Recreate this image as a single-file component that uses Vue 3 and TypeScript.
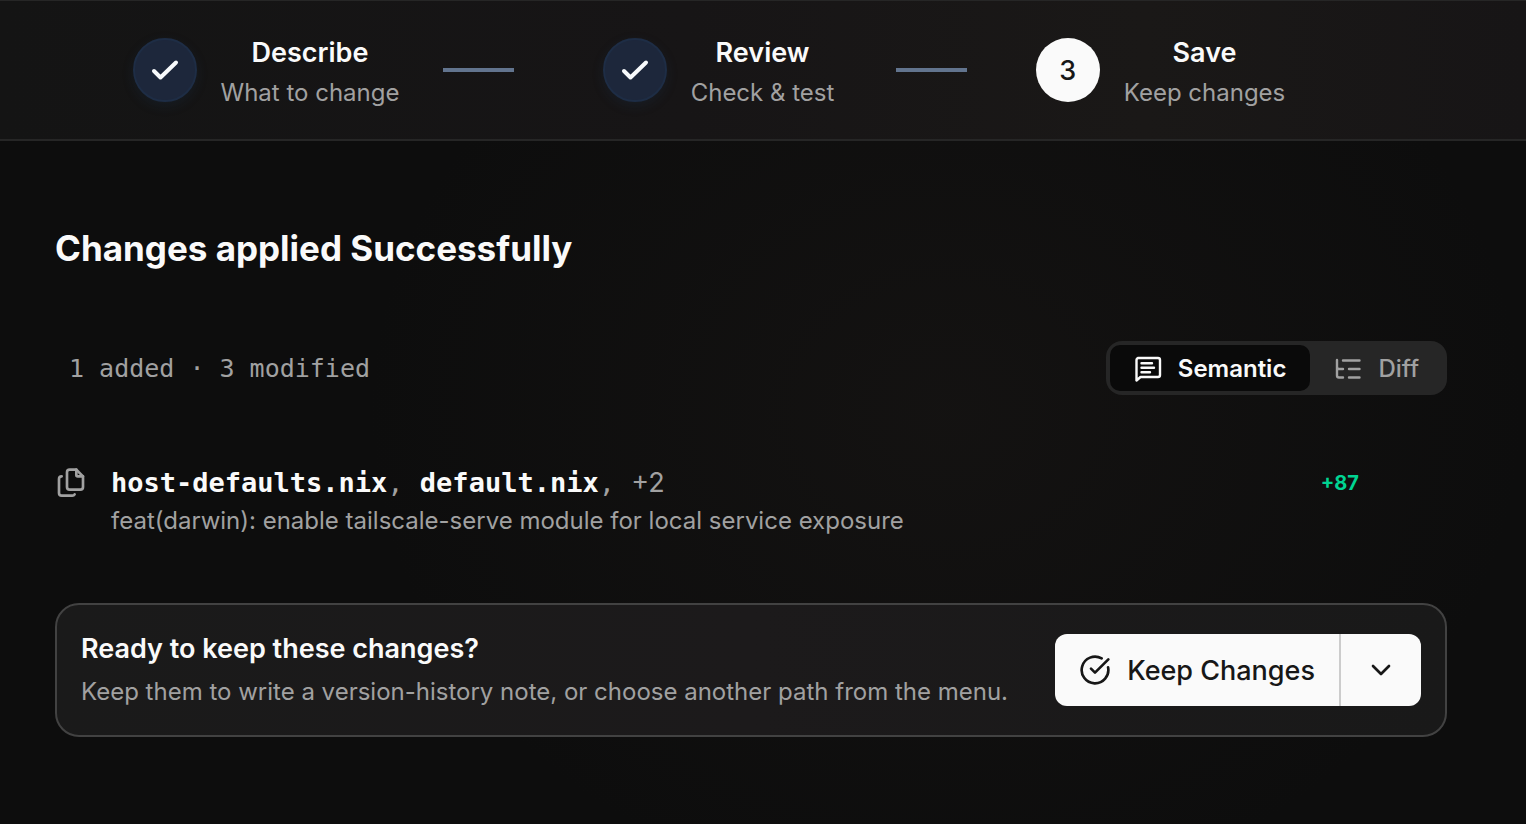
<script setup lang="ts">
import { ref } from 'vue'

interface Step {
  title: string
  hint: string
  done: boolean
}

const steps: Step[] = [
  { title: 'Describe', hint: 'What to change', done: true },
  { title: 'Review', hint: 'Check & test', done: true },
  { title: 'Save', hint: 'Keep changes', done: false },
]

const files = ['host-defaults.nix', 'default.nix']
const view = ref<'semantic' | 'diff'>('semantic')
</script>

<template>
  <div class="app">
    <header class="stepper">
      <ol class="steps">
        <template v-for="(step, i) in steps" :key="step.title">
          <li class="step" :aria-current="step.done ? undefined : 'step'">
            <span class="badge" :class="{ done: step.done }">
              <svg v-if="step.done" class="tick" viewBox="0 0 32 32" aria-hidden="true">
                <path d="M5 17l6.500 6.500L27 8.500" />
              </svg>
              <template v-else>{{ i + 1 }}</template>
            </span>
            <span class="step-text">
              <span class="step-title">{{ step.title }}</span>
              <span class="step-hint">{{ step.hint }}</span>
            </span>
          </li>
          <li v-if="i < steps.length - 1" class="connector" aria-hidden="true"></li>
        </template>
      </ol>
    </header>

    <main class="content">
      <h1>Changes applied Successfully</h1>

      <div class="toolbar">
        <p class="stats">1 added · 3 modified</p>
        <div class="toggle" role="group" aria-label="View">
          <button type="button" :class="{ active: view === 'semantic' }" :aria-pressed="view === 'semantic'" @click="view = 'semantic'">
            <svg class="icon" viewBox="0 0 28 28" aria-hidden="true">
              <path d="M4 4h20a2 2 0 0 1 2 2v15a2 2 0 0 1-2 2H6.500L2.500 26.500V6a2 2 0 0 1 2-2z" />
              <path d="M7.500 9.300h10.500M7.500 13.700h12.500M7.500 18.200h8.500" />
            </svg>
            Semantic
          </button>
          <button type="button" :class="{ active: view === 'diff' }" :aria-pressed="view === 'diff'" @click="view = 'diff'">
            <svg class="icon" viewBox="0 0 28 28" aria-hidden="true">
              <path d="M9 6.500h16.500M15 15h10.500M15 23.500h10.500M3 6v15.500a2 2 0 0 0 2 2h4M3 13a2 2 0 0 0 2 2h4" />
            </svg>
            Diff
          </button>
        </div>
      </div>

      <article class="change">
        <svg class="copy" viewBox="0 0 24 24" aria-hidden="true">
          <path d="M16 2h-5a2 2 0 0 0-2 2v11a2 2 0 0 0 2 2h8a2 2 0 0 0 2-2V7z" />
          <path d="M16 2v4a1 1 0 0 0 1 1h4" />
          <path d="M5 7a2 2 0 0 0-2 2v10.500a2 2 0 0 0 2 2h8a2 2 0 0 0 1.730-1" />
        </svg>
        <div class="change-body">
          <p class="files"><template v-for="f in files" :key="f"><strong>{{ f }}</strong>, </template><span class="more">+2</span></p>
          <p class="message">feat(darwin): enable tailscale-serve module for local service exposure</p>
        </div>
        <span class="count">+87</span>
      </article>

      <section class="panel">
        <div class="panel-text">
          <h2>Ready to keep these changes?</h2>
          <p>Keep them to write a version-history note, or choose another path from the menu.</p>
        </div>
        <div class="split">
          <button type="button" class="keep">
            <svg class="keep-icon" viewBox="0 0 24 24" aria-hidden="true">
              <path d="M21.801 10A10 10 0 1 1 17 3.335" />
              <path d="m9 11 3 3L22 4" />
            </svg>
            Keep Changes
          </button>
          <button type="button" class="menu" aria-label="More options">
            <svg class="chevron" viewBox="0 0 24 24" aria-hidden="true"><path d="m6 9 6 6 6-6" /></svg>
          </button>
        </div>
      </section>
    </main>
  </div>
</template>

<style>
html,
body {
  background: #0d0d0d;
}
</style>

<style scoped>
.app {
  min-height: 100vh;
  box-sizing: border-box;
  font-family: Inter, 'Liberation Sans', sans-serif;
  color: #fafafa;
  background:
    radial-gradient(ellipse 38% 60% at 62% 50%, rgba(50, 42, 38, 0.18), transparent),
    #0d0d0d;
}
svg {
  fill: none;
  stroke: currentColor;
  stroke-width: 2;
  stroke-linecap: round;
  stroke-linejoin: round;
  flex: none;
}
p,
h1,
h2 {
  margin: 0;
}
button {
  font: inherit;
  color: inherit;
  border: 0;
  cursor: pointer;
  display: flex;
  align-items: center;
}
.stepper {
  border-top: 1px solid #262626;
  border-bottom: 2px solid #262626;
  background: linear-gradient(90deg, #141414, #171516 45%, #1a1817 75%, #171516);
  padding: 26px 199px 26px 89px;
}
.steps {
  list-style: none;
  margin: 0;
  padding: 0;
  display: grid;
  grid-template-columns: 354fr 98px 355fr 98px 333fr;
  align-items: center;
}
.step {
  display: flex;
  justify-content: center;
  align-items: center;
  gap: 24px;
}
.badge {
  width: 64px;
  height: 64px;
  box-sizing: border-box;
  border-radius: 50%;
  display: grid;
  place-items: center;
  background: #fafafa;
  color: #171717;
  font-size: 27px;
  font-weight: 500;
}
.badge.done {
  background: #1d273b;
  border: 2px solid #1e2d45;
  color: #f8fafc;
  box-shadow: 0 4px 12px rgba(30, 58, 95, 0.2);
}
.tick {
  width: 32px;
  height: 32px;
  stroke-width: 4;
}
.step-text {
  display: flex;
  flex-direction: column;
  align-items: center;
  padding-top: 6px;
  white-space: nowrap;
}
.step-title {
  font-size: 27px;
  line-height: 40px;
  font-weight: 600;
}
.step-hint {
  font-size: 24px;
  line-height: 40px;
  color: #a1a1a1;
}
.connector {
  width: 71px;
  height: 4px;
  background: #62748e;
}
.content {
  padding: 78px 79px 56px 55px;
}
h1 {
  font-size: 35px;
  line-height: 58px;
  font-weight: 700;
}
.toolbar {
  display: flex;
  justify-content: space-between;
  align-items: center;
  margin-top: 64px;
}
.stats {
  padding-left: 14px;
  font-family: 'DejaVu Sans Mono', 'Liberation Mono', monospace;
  font-size: 25px;
  color: #a1a1a1;
}
.toggle {
  display: flex;
  padding: 4px;
  border-radius: 16px;
  background: #262626;
}
.toggle button {
  height: 46px;
  padding: 0 24px;
  gap: 16px;
  border-radius: 10px;
  background: transparent;
  color: #a1a1a1;
  font-size: 24px;
  font-weight: 500;
}
.toggle button.active {
  background: #0a0a0a;
  color: #fafafa;
  font-weight: 600;
}
.icon {
  width: 28px;
  height: 28px;
  stroke-width: 2.4;
}
.change {
  display: flex;
  align-items: flex-start;
  padding-right: 88px;
  margin-top: 68px;
}
.copy {
  width: 32px;
  height: 32px;
  margin-top: 4px;
  color: #a1a1a1;
}
.change-body {
  flex: 1;
  padding-left: 24px;
}
.files {
  font-family: 'DejaVu Sans Mono', 'Liberation Mono', monospace;
  font-size: 27px;
  line-height: 40px;
  color: #a1a1a1;
}
.files strong {
  color: #fafafa;
}
.more {
  font-family: Inter, 'Liberation Sans', sans-serif;
  font-size: 27px;
}
.message {
  font-size: 24px;
  line-height: 36px;
  color: #a1a1a1;
}
.count {
  font-size: 20px;
  line-height: 40px;
  font-weight: 700;
  color: #00d492;
}
.panel {
  display: flex;
  align-items: center;
  justify-content: space-between;
  gap: 24px;
  margin-top: 64px;
  padding: 22px 24px;
  border: 2px solid #424242;
  border-radius: 24px;
  background: linear-gradient(90deg, #1a1a1a, #1c1a1b 50%, #191919);
}
h2 {
  font-size: 27px;
  line-height: 44px;
  font-weight: 600;
}
.panel-text p {
  font-size: 24px;
  line-height: 42px;
  color: #a1a1a1;
  white-space: nowrap;
}
.split {
  display: flex;
  height: 72px;
  border-radius: 12px;
  overflow: hidden;
  color: #171717;
}
.keep,
.menu {
  background: #fafafa;
}
.keep {
  padding: 0 24px;
  gap: 16px;
  font-size: 27px;
  font-weight: 500;
  white-space: nowrap;
}
.keep-icon {
  width: 32px;
  height: 32px;
}
.menu {
  width: 82px;
  justify-content: center;
  border-left: 2px solid #cccccc;
}
.chevron {
  width: 32px;
  height: 32px;
}
</style>
